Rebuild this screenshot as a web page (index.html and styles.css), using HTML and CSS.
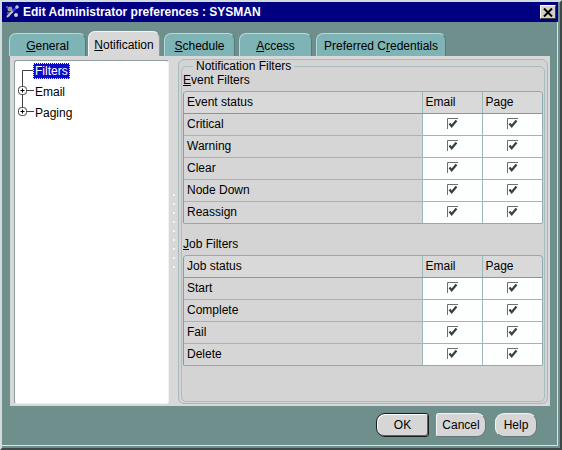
FILE: index.html
```html
<!DOCTYPE html>
<html lang="en">
<head>
    <meta charset="UTF-8">
    <title>Edit Administrator preferences : SYSMAN</title>
    <link rel="stylesheet" href="styles.css">
</head>
<body>
    <div class="window">
        <div class="titlebar">
            <svg class="app-icon" width="16" height="16" viewBox="0 0 16 16">
                <path d="M2 13l6-6" stroke="#c8c8c8" stroke-width="2"/>
                <path d="M8 7l3-3" stroke="#4040ff" stroke-width="2"/>
                <circle cx="5" cy="5" r="2.5" fill="#9a9a9a"/>
                <circle cx="11" cy="11" r="2" fill="#d0d0d0"/>
                <path d="M12 1v4M10 3h4" stroke="#ffffff" stroke-width="1"/>
                <path d="M2 9h3M1 3h2" stroke="#a0a0ff" stroke-width="1"/>
            </svg>
            <span class="title">Edit Administrator preferences : SYSMAN</span>
            <span class="close">
                <svg width="10" height="9" viewBox="0 0 10 9">
                    <path d="M1 0.5l8 8M9 0.5l-8 8" stroke="#000" stroke-width="2"/>
                </svg>
            </span>
        </div>

        <div class="tabs">
            <div class="tab tab-general"><u>G</u>eneral</div>
            <div class="tab tab-notification active"><u>N</u>otification</div>
            <div class="tab tab-schedule"><u>S</u>chedule</div>
            <div class="tab tab-access"><u>A</u>ccess</div>
            <div class="tab tab-credentials">Preferred C<u>r</u>edentials</div>
        </div>

        <div class="content">
            <div class="tree">
                <div class="tree-row">
                    <svg width="19" height="21" viewBox="0 0 19 21">
                        <path d="M7.5 9.5V21M7.5 9.5H19" stroke="#404040" fill="none"/>
                    </svg>
                    <span class="tree-label selected">Filters</span>
                </div>
                <div class="tree-row">
                    <svg width="19" height="21" viewBox="0 0 19 21">
                        <path d="M7.5 0V5.5M7.5 13.5V21M11.5 9.5H19" stroke="#404040" fill="none"/>
                        <rect x="3.5" y="5.5" width="8" height="8" rx="3" fill="#fff" stroke="#404040"/>
                        <path d="M5.5 9.5h4M7.5 7.5v4" stroke="#000"/>
                    </svg>
                    <span class="tree-label">Email</span>
                </div>
                <div class="tree-row">
                    <svg width="19" height="21" viewBox="0 0 19 21">
                        <path d="M7.5 0V5.5M11.5 9.5H19" stroke="#404040" fill="none"/>
                        <rect x="3.5" y="5.5" width="8" height="8" rx="3" fill="#fff" stroke="#404040"/>
                        <path d="M5.5 9.5h4M7.5 7.5v4" stroke="#000"/>
                    </svg>
                    <span class="tree-label">Paging</span>
                </div>
            </div>

            <div class="splitter"><div class="grip"></div></div>

            <div class="panel">
                <fieldset class="filters">
                    <legend>Notification Filters</legend>

                    <div class="group-label"><u>E</u>vent Filters</div>
                    <div class="grid">
                        <table>
                            <colgroup>
                                <col class="col-status">
                                <col class="col-check">
                                <col>
                            </colgroup>
                            <tr class="head">
                                <td>Event status</td><td>Email</td><td>Page</td>
                            </tr>
                            <tr>
                                <td>Critical</td>
                                <td class="check"><svg width="11" height="11" viewBox="0 0 11 11"><path d="M0.5 11V0.5H11" stroke="#6e6e6e" fill="none"/><path d="M2.5 5.5l2.2 2.8L9.5 2.5" stroke="#354242" stroke-width="2.2" fill="none"/></svg></td>
                                <td class="check"><svg width="11" height="11" viewBox="0 0 11 11"><path d="M0.5 11V0.5H11" stroke="#6e6e6e" fill="none"/><path d="M2.5 5.5l2.2 2.8L9.5 2.5" stroke="#354242" stroke-width="2.2" fill="none"/></svg></td>
                            </tr>
                            <tr>
                                <td>Warning</td>
                                <td class="check"><svg width="11" height="11" viewBox="0 0 11 11"><path d="M0.5 11V0.5H11" stroke="#6e6e6e" fill="none"/><path d="M2.5 5.5l2.2 2.8L9.5 2.5" stroke="#354242" stroke-width="2.2" fill="none"/></svg></td>
                                <td class="check"><svg width="11" height="11" viewBox="0 0 11 11"><path d="M0.5 11V0.5H11" stroke="#6e6e6e" fill="none"/><path d="M2.5 5.5l2.2 2.8L9.5 2.5" stroke="#354242" stroke-width="2.2" fill="none"/></svg></td>
                            </tr>
                            <tr>
                                <td>Clear</td>
                                <td class="check"><svg width="11" height="11" viewBox="0 0 11 11"><path d="M0.5 11V0.5H11" stroke="#6e6e6e" fill="none"/><path d="M2.5 5.5l2.2 2.8L9.5 2.5" stroke="#354242" stroke-width="2.2" fill="none"/></svg></td>
                                <td class="check"><svg width="11" height="11" viewBox="0 0 11 11"><path d="M0.5 11V0.5H11" stroke="#6e6e6e" fill="none"/><path d="M2.5 5.5l2.2 2.8L9.5 2.5" stroke="#354242" stroke-width="2.2" fill="none"/></svg></td>
                            </tr>
                            <tr>
                                <td>Node Down</td>
                                <td class="check"><svg width="11" height="11" viewBox="0 0 11 11"><path d="M0.5 11V0.5H11" stroke="#6e6e6e" fill="none"/><path d="M2.5 5.5l2.2 2.8L9.5 2.5" stroke="#354242" stroke-width="2.2" fill="none"/></svg></td>
                                <td class="check"><svg width="11" height="11" viewBox="0 0 11 11"><path d="M0.5 11V0.5H11" stroke="#6e6e6e" fill="none"/><path d="M2.5 5.5l2.2 2.8L9.5 2.5" stroke="#354242" stroke-width="2.2" fill="none"/></svg></td>
                            </tr>
                            <tr>
                                <td>Reassign</td>
                                <td class="check"><svg width="11" height="11" viewBox="0 0 11 11"><path d="M0.5 11V0.5H11" stroke="#6e6e6e" fill="none"/><path d="M2.5 5.5l2.2 2.8L9.5 2.5" stroke="#354242" stroke-width="2.2" fill="none"/></svg></td>
                                <td class="check"><svg width="11" height="11" viewBox="0 0 11 11"><path d="M0.5 11V0.5H11" stroke="#6e6e6e" fill="none"/><path d="M2.5 5.5l2.2 2.8L9.5 2.5" stroke="#354242" stroke-width="2.2" fill="none"/></svg></td>
                            </tr>
                        </table>
                    </div>

                    <div class="group-label job"><u>J</u>ob Filters</div>
                    <div class="grid">
                        <table>
                            <colgroup>
                                <col class="col-status">
                                <col class="col-check">
                                <col>
                            </colgroup>
                            <tr class="head">
                                <td>Job status</td><td>Email</td><td>Page</td>
                            </tr>
                            <tr>
                                <td>Start</td>
                                <td class="check"><svg width="11" height="11" viewBox="0 0 11 11"><path d="M0.5 11V0.5H11" stroke="#6e6e6e" fill="none"/><path d="M2.5 5.5l2.2 2.8L9.5 2.5" stroke="#354242" stroke-width="2.2" fill="none"/></svg></td>
                                <td class="check"><svg width="11" height="11" viewBox="0 0 11 11"><path d="M0.5 11V0.5H11" stroke="#6e6e6e" fill="none"/><path d="M2.5 5.5l2.2 2.8L9.5 2.5" stroke="#354242" stroke-width="2.2" fill="none"/></svg></td>
                            </tr>
                            <tr>
                                <td>Complete</td>
                                <td class="check"><svg width="11" height="11" viewBox="0 0 11 11"><path d="M0.5 11V0.5H11" stroke="#6e6e6e" fill="none"/><path d="M2.5 5.5l2.2 2.8L9.5 2.5" stroke="#354242" stroke-width="2.2" fill="none"/></svg></td>
                                <td class="check"><svg width="11" height="11" viewBox="0 0 11 11"><path d="M0.5 11V0.5H11" stroke="#6e6e6e" fill="none"/><path d="M2.5 5.5l2.2 2.8L9.5 2.5" stroke="#354242" stroke-width="2.2" fill="none"/></svg></td>
                            </tr>
                            <tr>
                                <td>Fail</td>
                                <td class="check"><svg width="11" height="11" viewBox="0 0 11 11"><path d="M0.5 11V0.5H11" stroke="#6e6e6e" fill="none"/><path d="M2.5 5.5l2.2 2.8L9.5 2.5" stroke="#354242" stroke-width="2.2" fill="none"/></svg></td>
                                <td class="check"><svg width="11" height="11" viewBox="0 0 11 11"><path d="M0.5 11V0.5H11" stroke="#6e6e6e" fill="none"/><path d="M2.5 5.5l2.2 2.8L9.5 2.5" stroke="#354242" stroke-width="2.2" fill="none"/></svg></td>
                            </tr>
                            <tr>
                                <td>Delete</td>
                                <td class="check"><svg width="11" height="11" viewBox="0 0 11 11"><path d="M0.5 11V0.5H11" stroke="#6e6e6e" fill="none"/><path d="M2.5 5.5l2.2 2.8L9.5 2.5" stroke="#354242" stroke-width="2.2" fill="none"/></svg></td>
                                <td class="check"><svg width="11" height="11" viewBox="0 0 11 11"><path d="M0.5 11V0.5H11" stroke="#6e6e6e" fill="none"/><path d="M2.5 5.5l2.2 2.8L9.5 2.5" stroke="#354242" stroke-width="2.2" fill="none"/></svg></td>
                            </tr>
                        </table>
                    </div>
                </fieldset>
            </div>
        </div>

        <div class="actions">
            <button class="btn btn-ok">OK</button>
            <button class="btn btn-cancel">Cancel</button>
            <button class="btn btn-help">Help</button>
        </div>
    </div>
</body>
</html>
```

FILE: styles.css
```css
*{
    margin: 0;
    padding: 0;
    box-sizing: border-box;
}

body{
    font-family: "Liberation Sans", Arial, sans-serif;
    font-size: 12px;
    color: #000;
    background: #6f8f8c;
}

u{
    text-decoration: underline;
    text-underline-offset: 1px;
}

.window{
    width: 562px;
    height: 450px;
    display: flex;
    flex-direction: column;
    background: #6f8f8c;
    border: 2px solid;
    border-color: #d3dcdc #3e4848 #3e4848 #d3dcdc;
    box-shadow: inset -2px -2px 0 #6f8f8c, inset -3px -3px 0 #dbe4e4;
}

/* title bar */
.titlebar{
    height: 20px;
    margin-right: 2px;
    padding: 0 2px 0 3px;
    display: flex;
    align-items: center;
    background: #000080;
    color: #fff;
    font-weight: bold;
}

.app-icon{
    margin-right: 2px;
}

.close{
    margin-left: auto;
    width: 16px;
    height: 14px;
    display: flex;
    align-items: center;
    justify-content: center;
    background: #d4d0c8;
    border: 1px solid;
    border-color: #fff #404040 #404040 #fff;
}

/* tabs */
.tabs{
    height: 34px;
    padding-left: 7px;
    display: flex;
    align-items: flex-end;
    gap: 4px;
}

.tab{
    height: 23px;
    padding-top: 2px;
    display: flex;
    align-items: center;
    justify-content: center;
    background: #7fb4b6;
    border: 1px solid;
    border-bottom: 0;
    border-color: #b6d9d9 #4f7d7d #4f7d7d #b6d9d9;
    border-radius: 7px 7px 0 0;
}

.tab.active{
    height: 25px;
    background: #d8d8d8;
    border-color: #f4f4f4 #8a9a9a #8a9a9a #f4f4f4;
    margin-left: -2px;
}

.tab-general{ width: 77px; }
.tab-notification{ width: 72px; }
.tab-schedule{ width: 71px; }
.tab-access{ width: 73px; }
.tab-credentials{ width: 130px; }

/* page under the tabs */
.content{
    width: 540px;
    height: 350px;
    margin-left: 8px;
    padding: 3px 2px 2px 4px;
    display: flex;
    background: #d8d8d8;
}

.tree{
    width: 155px;
    margin-top: 1px;
    background: #fff;
    border: 1px solid;
    border-color: #8e9e9e #eef4f4 #eef4f4 #8e9e9e;
    border-radius: 3px;
}

.tree-row{
    height: 21px;
    display: flex;
    align-items: center;
}

.tree-row:first-child{
    height: 20px;
}

.tree-label{
    margin-left: -1px;
    padding: 0 2px;
    height: 16px;
    line-height: 16px;
}

.tree-label.selected{
    background: #0a0ac8;
    color: #fff;
    outline: 1px dotted #f0f0c0;
    outline-offset: -1px;
}

.splitter{
    width: 9px;
    display: flex;
    align-items: center;
    justify-content: center;
}

.grip{
    width: 2px;
    height: 76px;
    background: repeating-linear-gradient(to bottom, #f6f6f6 0 2px, transparent 2px 9px);
}

.panel{
    flex: 1;
    padding: 0 2px 1px;
    display: flex;
    flex-direction: column;
    background: #d4d4d4;
    border: 1px solid #a6bcbc;
    border-radius: 6px;
}

.filters{
    flex: 1;
    min-width: 0;
    padding: 0 1px 2px;
    border: 1px solid #a9bfbf;
    border-radius: 5px;
}

.filters legend{
    margin-left: 10px;
    padding: 0 3px;
    line-height: 12px;
}

.group-label{
    height: 14px;
    line-height: 14px;
    margin: 1px 0 4px;
}

.group-label.job{
    margin-top: 13px;
}

/* filter grids */
.grid{
    border: 1px solid #8fabab;
    border-left-color: #7f9d9d;
    border-radius: 4px 4px 2px 2px;
    overflow: hidden;
}

.grid table{
    width: 100%;
    table-layout: fixed;
    border-collapse: collapse;
}

.col-status{ width: 238px; }
.col-check{ width: 60px; }

.grid td{
    height: 22px;
    padding: 0 3px;
    background: #d6d6d6;
    border-bottom: 1px solid #9cb8b8;
    white-space: nowrap;
}

.grid td + td{
    border-left: 1px solid #9cb8b8;
}

.grid tr:last-child td{
    border-bottom: 0;
}

.grid .head td{
    height: 21px;
    background: #d9d9d9;
    border-bottom-color: #7e9c9c;
}

.grid td.check{
    background: #fdfefe;
    text-align: center;
    padding-top: 2px;
}

/* buttons */
.actions{
    padding: 7px 23px 0 0;
    display: flex;
    justify-content: flex-end;
}

.btn{
    height: 24px;
    font-family: inherit;
    font-size: 12px;
    color: #000;
    background: #d6d6d6;
    border: 1px solid;
    border-color: #f4f4f4 #667676 #667676 #f4f4f4;
    border-radius: 9px;
}

.btn-ok{
    width: 53px;
    border-color: #1c1c1c;
    border-radius: 9px 3px 3px 9px;
    box-shadow: inset 1px 1px 0 #fff, inset -1px -1px 0 #606060;
}

.btn-cancel{
    width: 50px;
    margin-left: 7px;
    border-radius: 3px 9px 9px 3px;
}

.btn-help{
    width: 42px;
    margin-left: 9px;
}
```
